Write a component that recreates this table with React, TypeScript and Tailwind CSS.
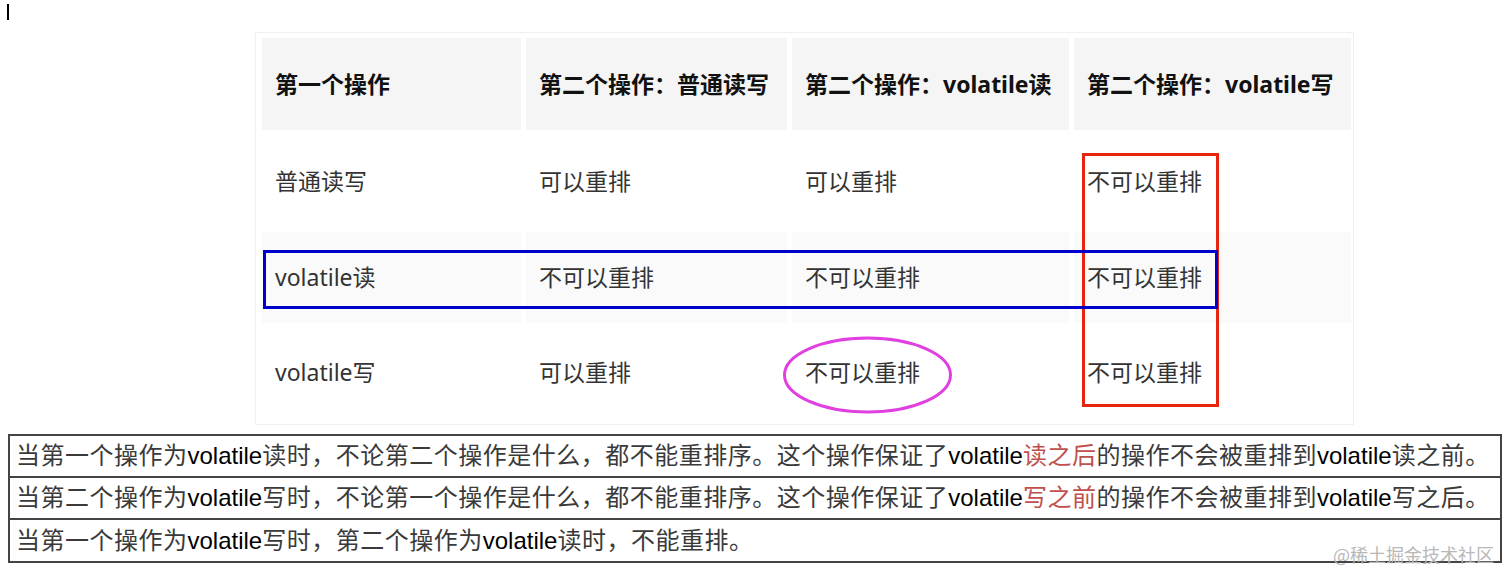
import React from "react";

const topFont = { fontFamily: '"Noto Sans", "Noto Sans CJK SC", sans-serif' };
const botFont = { fontFamily: '"Liberation Sans", "Noto Sans CJK SC", sans-serif' };

const cols = "grid grid-cols-[259px_261px_277px_277px] gap-x-[5px]";

function Row({ cells, h, bg }: { cells: string[]; h: string; bg: string }) {
  return (
    <div className={`${cols} mt-[2px]`}>
      {cells.map((c, i) => (
        <div key={i} className={`${h} ${bg} flex items-center pl-[13px] text-[#333] text-[23px]`}>
          {c}
        </div>
      ))}
    </div>
  );
}

const V = ({ children }: { children: React.ReactNode }) => (
  <span className="text-black tracking-normal">{children}</span>
);
const R = ({ children }: { children: React.ReactNode }) => (
  <span className="text-[#c0504d]">{children}</span>
);

export default function App() {
  return (
    <div className="relative w-[1512px] h-[586px] bg-white overflow-hidden">
      <div className="pl-[7px] pt-[4px]">
        <span className="block w-[2px] h-[16px] bg-black" />
      </div>

      <div className="ml-[255px] mt-[12px] w-[1099px] border border-[#f0f0f0] px-[6px] pt-[5px] pb-[4px]" style={topFont}>
        <div className={cols}>
          {["第一个操作", "第二个操作：普通读写", "第二个操作：volatile读", "第二个操作：volatile写"].map((t, i) => (
            <div key={i} className="h-[92px] bg-[#f5f5f5] flex items-center pl-[13px] font-bold text-[23px] text-[#111] whitespace-nowrap">
              {t}
            </div>
          ))}
        </div>
        <Row cells={["普通读写", "可以重排", "可以重排", "不可以重排"]} h="h-[98px]" bg="bg-white" />
        <Row cells={["volatile读", "不可以重排", "不可以重排", "不可以重排"]} h="h-[91px]" bg="bg-[#fafafa]" />
        <Row cells={["volatile写", "可以重排", "不可以重排", "不可以重排"]} h="h-[95px]" bg="bg-white" />
      </div>

      <div className="ml-[8px] mt-[9px] w-[1494px] border-2 border-[#444] text-[24px] text-[#3a3a3a] whitespace-nowrap" style={botFont}>
        <div className="h-[42px] flex items-center pl-[6px] border-b-2 border-[#444] tracking-[0.5px]">
          <span>当第一个操作为<V>volatile</V>读时，不论第二个操作是什么，都不能重排序。这个操作保证了<V>volatile</V><R>读之后</R>的操作不会被重排到<V>volatile</V>读之前。</span>
        </div>
        <div className="h-[42px] flex items-center pl-[6px] border-b-2 border-[#444] tracking-[0.5px]">
          <span>当第二个操作为<V>volatile</V>写时，不论第一个操作是什么，都不能重排序。这个操作保证了<V>volatile</V><R>写之前</R>的操作不会被重排到<V>volatile</V>写之后。</span>
        </div>
        <div className="h-[41px] flex items-center pl-[6px] tracking-[0.5px]">
          <span>当第一个操作为<V>volatile</V>写时，第二个操作为<V>volatile</V>读时，不能重排。</span>
        </div>
      </div>

      {/* annotations */}
      <div className="absolute left-[1082px] top-[153px] w-[137px] h-[254px] border-[3px] border-[#e8230f]" />
      <div className="absolute left-[263px] top-[250px] w-[955px] h-[59px] border-[3px] border-[#0000cc]" />
      <svg className="absolute left-[780px] top-[334px]" width="175" height="82" viewBox="0 0 175 82">
        <ellipse cx="87.5" cy="41" rx="83" ry="37" fill="none" stroke="#e040e0" strokeWidth="3" />
      </svg>
      <div
        className="absolute left-[1333px] top-[545px] text-[18px] text-[#b8b8b8] leading-none"
        style={{ fontFamily: '"Noto Sans CJK SC", sans-serif' }}
      >
        @稀土掘金技术社区
      </div>
    </div>
  );
}
